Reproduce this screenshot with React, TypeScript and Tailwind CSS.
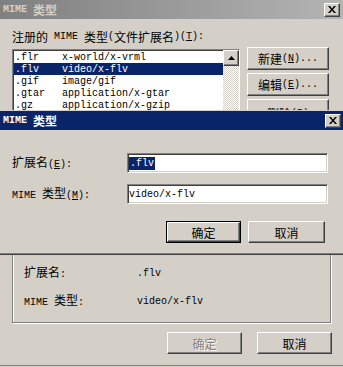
import React from "react";

const raised =
  "border border-t-white border-l-white border-r-[#404040] border-b-[#404040] shadow-[inset_-1px_-1px_0_#808080,inset_1px_1px_0_#d4d0c8]";
const sunken =
  "border border-t-[#808080] border-l-[#808080] border-r-white border-b-white shadow-[inset_1px_1px_0_#404040,inset_-1px_-1px_0_#d4d0c8]";

function Zh({ children, className = "" }: { children: React.ReactNode; className?: string }) {
  return (
    <span className={`font-['Noto_Sans_CJK_SC',sans-serif] text-[12px] ${className}`}>{children}</span>
  );
}

function CloseBox() {
  return (
    <div className={`flex h-[14px] w-[16px] items-center justify-center bg-[#d4d0c8] ${raised}`}>
      <svg width="8" height="7" viewBox="0 0 8 7">
        <path d="M0 0h2l2 2.5L6 0h2L5 3.5 8 7H6L4 4.5 2 7H0l3-3.5z" fill="black" />
      </svg>
    </div>
  );
}

const rows = [
  [".flr", "x-world/x-vrml"],
  [".flv", "video/x-flv"],
  [".gif", "image/gif"],
  [".gtar", "application/x-gtar"],
  [".gz", "application/x-gzip"],
];

export default function App() {
  return (
    <div className="relative h-[367px] w-[343px] overflow-hidden bg-[#d4d0c8] font-['Liberation_Mono','Noto_Sans_CJK_SC',monospace] text-[10px] leading-[13px] text-black">
      {/* background dialog */}
      <div className="flex h-[366px] flex-col border-b border-b-[#808080]">
        <div className="flex h-[19px] items-center justify-between bg-gradient-to-r from-[#808080] to-[#b4b4b4] pl-[3px] pr-[3px] font-bold text-[#d4d0c8]">
          <div className="flex items-center gap-[6px]">
            <span>MIME</span>
            <Zh className="font-bold">类型</Zh>
          </div>
          <CloseBox />
        </div>

        <div className="h-[216px] overflow-hidden px-[12px] pt-[11px]">
          <div className="flex h-[13px] items-center">
            <Zh>注册的</Zh>
            <span>&nbsp;MIME&nbsp;</span>
            <Zh>类型</Zh>
            <span>(</span>
            <Zh>文件扩展名</Zh>
            <span>)(<u>T</u>):</span>
          </div>
          <div className="mt-[4px] flex gap-[7px]">
            <div className={`mt-[2px] flex h-[80px] w-[228px] bg-white ${sunken}`}>
              <div className="flex-1 pt-[1px]">
                {rows.map(([ext, mime], i) => (
                  <div
                    key={ext}
                    className={`ml-[1px] flex h-[12px] items-center pl-[1px] ${i === 1 ? "bg-[#0a246a] text-white" : ""}`}
                  >
                    <span className="w-[47px]">{ext}</span>
                    <span>{mime}</span>
                  </div>
                ))}
              </div>
              <div className="flex w-[16px] flex-col bg-[repeating-conic-gradient(#d4d0c8_0_25%,#ffffff_0_50%)] bg-size-[2px_2px]">
                <div className={`flex h-[16px] w-[16px] items-center justify-center bg-[#d4d0c8] ${raised}`}>
                  <svg width="7" height="4" viewBox="0 0 7 4">
                    <path d="M3.5 0L7 4H0z" fill="black" />
                  </svg>
                </div>
              </div>
            </div>
            <div className="flex w-[82px] flex-col gap-[3px]">
              <div className={`flex h-[23px] items-center justify-center ${raised}`}>
                <Zh>新建</Zh>
                <span>(<u>N</u>)...</span>
              </div>
              <div className={`flex h-[23px] items-center justify-center ${raised}`}>
                <Zh>编辑</Zh>
                <span>(<u>E</u>)...</span>
              </div>
              <div className={`flex h-[23px] items-center justify-center pt-[6px] ${raised}`}>
                <Zh>删除</Zh>
                <span>(<u>R</u>)</span>
              </div>
            </div>
          </div>
        </div>

        <div className="ml-[12px] h-[88px] w-[319px] border border-[#808080] pl-[11px] pt-[30px] shadow-[1px_1px_0_#fff,inset_1px_1px_0_#fff]">
          <div className="flex h-[14px] items-center">
            <div className="w-[113px]">
              <Zh>扩展名</Zh>
              <span>:</span>
            </div>
            <span>.flv</span>
          </div>
          <div className="mt-[14px] flex h-[14px] items-center">
            <div className="w-[113px]">
              <span>MIME </span>
              <Zh>类型</Zh>
              <span>:</span>
            </div>
            <span>video/x-flv</span>
          </div>
        </div>

        <div className="mt-[9px] flex justify-end gap-[15px] pr-[11px]">
          <div className={`flex h-[22px] w-[75px] items-center justify-center ${raised}`}>
            <Zh className="text-[#808080] [text-shadow:1px_1px_0_#fff]">确定</Zh>
          </div>
          <div className={`flex h-[22px] w-[75px] items-center justify-center ${raised}`}>
            <Zh>取消</Zh>
          </div>
        </div>
      </div>

      {/* foreground dialog */}
      <div className="absolute left-0 top-[110px] w-[343px] border-t border-b border-t-[#d4d0c8] border-b-[#404040] bg-[#d4d0c8] shadow-[inset_0_-1px_0_#808080]">
        <div className="flex h-[19px] items-center justify-between bg-[#0a246a] pl-[3px] pr-[2px] font-bold text-white">
          <div className="flex items-center gap-[6px]">
            <span>MIME</span>
            <Zh className="font-bold">类型</Zh>
          </div>
          <CloseBox />
        </div>
        <div className="pb-[11px] pl-[12px] pt-[23px]">
          <div className="flex h-[20px] items-center">
            <div className="w-[115px]">
              <Zh>扩展名</Zh>
              <span>(<u>E</u>):</span>
            </div>
            <div className={`flex h-[20px] w-[201px] items-center bg-white px-[1px] ${sunken}`}>
              <span className="bg-[#0a246a] pl-[1px] pr-[1px] leading-[13px] text-white">.flv</span>
            </div>
          </div>
          <div className="mt-[11px] flex h-[20px] items-center">
            <div className="w-[115px]">
              <span>MIME </span>
              <Zh>类型</Zh>
              <span>(<u>M</u>):</span>
            </div>
            <div className={`flex h-[20px] w-[201px] items-center bg-white px-[1px] ${sunken}`}>
              <span>video/x-flv</span>
            </div>
          </div>
          <div className="mt-[17px] flex justify-end gap-[7px] pr-[18px]">
            <div className="h-[22px] w-[75px] border border-black">
              <div className={`flex h-full items-center justify-center ${raised}`}>
                <Zh>确定</Zh>
              </div>
            </div>
            <div className={`flex h-[22px] w-[77px] items-center justify-center ${raised}`}>
              <Zh>取消</Zh>
            </div>
          </div>
        </div>
      </div>
    </div>
  );
}
